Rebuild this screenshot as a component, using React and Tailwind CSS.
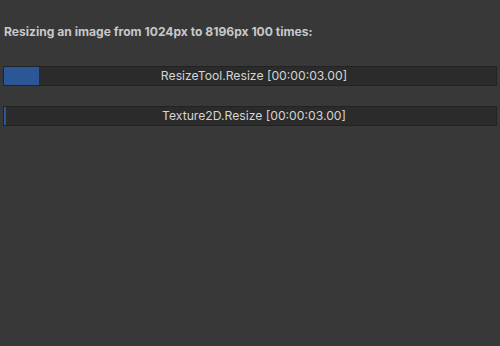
export default function App() {
  return (
    <div className="w-[500px] h-[346px] bg-[#383838] pt-[24px] flex flex-col" style={{ fontFamily: "Inter, 'Noto Sans', sans-serif" }}>
      <div className="px-[4px] text-[12.1px] leading-[16px] font-bold text-[#c8c8c8]">
        Resizing an image from 1024px to 8196px 100 times:
      </div>
      <div className="mt-[26px] mx-[3px] h-[20px] relative bg-[#2b2b2b] border border-[#232323] flex items-center justify-center">
        <div className="absolute left-0 top-0 bottom-0 w-[35px] bg-[#2b5797]"></div>
        <span className="relative pl-[8px] text-[12.2px] text-[#d4d4d4]">ResizeTool.Resize [00:00:03.00]</span>
      </div>
      <div className="mt-[20px] mx-[3px] h-[20px] relative bg-[#2b2b2b] border border-[#232323] flex items-center justify-center">
        <div className="absolute left-0 top-0 bottom-0 w-[2px] bg-[#2b5797]"></div>
        <span className="relative pl-[8px] text-[12.2px] text-[#d4d4d4]">Texture2D.Resize [00:00:03.00]</span>
      </div>
    </div>
  );
}
